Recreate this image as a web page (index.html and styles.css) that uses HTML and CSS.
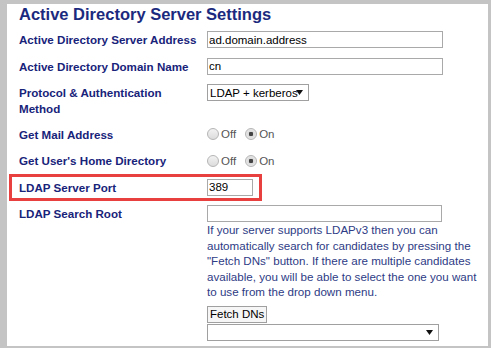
FILE: index.html
```html
<!DOCTYPE html>
<html lang="en">
<head>
    <meta charset="UTF-8">
    <title>Active Directory Server Settings</title>
    <link rel="stylesheet" href="styles.css">
</head>
<body>
    <div class="panel">
        <h1 class="title">Active Directory Server Settings</h1>

        <div class="row">
            <label class="label">Active Directory Server Address</label>
            <input class="input wide" type="text" value="ad.domain.address">
        </div>

        <div class="row">
            <label class="label">Active Directory Domain Name</label>
            <input class="input wide" type="text" value="cn">
        </div>

        <div class="row">
            <label class="label">Protocol &amp; Authentication Method</label>
            <span class="select-wrap proto">
                <select class="select">
                    <option>LDAP + kerberos</option>
                </select>
                <svg class="arrow" width="7" height="5" viewBox="0 0 7 5"><path d="M0 0h7L3.5 5z" fill="#111"/></svg>
            </span>
        </div>

        <div class="row short">
            <label class="label">Get Mail Address</label>
            <div class="radios">
                <label class="radio"><input type="radio" name="mail"> Off</label>
                <label class="radio"><input type="radio" name="mail" checked> On</label>
            </div>
        </div>

        <div class="row">
            <label class="label">Get User's Home Directory</label>
            <div class="radios">
                <label class="radio"><input type="radio" name="home"> Off</label>
                <label class="radio"><input type="radio" name="home" checked> On</label>
            </div>
        </div>

        <div class="row highlight">
            <label class="label">LDAP Server Port</label>
            <input class="input port" type="text" value="389">
        </div>

        <div class="row root">
            <label class="label">LDAP Search Root</label>
            <div class="field">
                <input class="input root-input" type="text" value="">
                <p class="help">If your server supports LDAPv3 then you can automatically search for candidates by pressing the "Fetch DNs" button. If there are multiple candidates available, you will be able to select the one you want to use from the drop down menu.</p>
                <button class="button">Fetch DNs</button>
                <span class="select-wrap dns">
                    <select class="select"><option></option></select>
                    <svg class="arrow" width="7" height="5" viewBox="0 0 7 5"><path d="M0 0h7L3.5 5z" fill="#111"/></svg>
                </span>
            </div>
        </div>
    </div>
</body>
</html>
```
FILE: styles.css
```css
body {
    margin: 0;
    background: #c4c4c4;
    font-family: "Liberation Sans", Arial, sans-serif;
}

.panel {
    background: #fff;
    margin: 4px 3px 0 7px;
    height: 342px;
    padding: 0 0 0 12px;
    box-sizing: border-box;
    overflow: hidden;
}

.title {
    margin: 0 0 7px;
    font-size: 16.5px;
    line-height: 20px;
    color: #1b2a7e;
}

.row {
    display: grid;
    grid-template-columns: 188px 1fr;
    align-items: start;
    justify-items: start;
    margin-bottom: 9.5px;
}

.row.short {
    margin-top: -1px;
}

.label {
    font-size: 11.6px;
    font-weight: bold;
    line-height: 16px;
    padding-top: 1px;
    padding-right: 8px;
    color: #18237a;
}

.input {
    box-sizing: border-box;
    height: 17px;
    border: 1px solid #a9a9a9;
    padding: 0 1px;
    margin: 0;
    font-family: "Liberation Sans", Arial, sans-serif;
    font-size: 11.5px;
    color: #000;
    background: #fff;
}

.wide {
    width: 236px;
}

.port {
    width: 46px;
}

.root-input {
    width: 235px;
    display: block;
}

.select-wrap {
    position: relative;
    display: inline-block;
}

.select {
    appearance: none;
    -webkit-appearance: none;
    box-sizing: border-box;
    height: 17px;
    border: 1px solid #a0a0a0;
    border-radius: 0;
    background: #fff;
    padding: 0 0 0 2px;
    margin: 0;
    font-family: "Liberation Sans", Arial, sans-serif;
    font-size: 11.5px;
    color: #000;
    display: block;
}

.proto .select {
    width: 102px;
}

.dns .select {
    width: 232px;
}

.arrow {
    position: absolute;
    top: 6px;
    right: 6px;
}

.radios {
    display: flex;
    gap: 9px;
    font-size: 11.5px;
    color: #555;
    height: 17px;
    align-items: center;
}

.radio {
    display: flex;
    align-items: center;
}

.radio input {
    appearance: none;
    -webkit-appearance: none;
    box-sizing: border-box;
    margin: 0 2px 0 0;
    width: 12px;
    height: 12px;
    border: 1px solid #b5b5b5;
    border-radius: 50%;
    background: linear-gradient(#f2f2f2, #dcdcdc);
}

.radio input:checked {
    background: radial-gradient(circle, #444 0, #444 2px, #dadada 2.5px, #f2f2f2 100%);
}

.highlight {
    position: relative;
}

.highlight::after {
    content: "";
    position: absolute;
    left: -10px;
    top: -5px;
    width: 253px;
    height: 27px;
    border: 3px solid #e8403f;
    box-sizing: border-box;
}

.help {
    margin: 0;
    width: 272px;
    font-size: 11.6px;
    line-height: 15.5px;
    color: #2e3b85;
}

.button {
    display: block;
    margin-top: 6px;
    height: 17px;
    padding: 0 2px;
    border: 1px solid #a0a0a0;
    background: #f6f6f6;
    font-family: "Liberation Sans", Arial, sans-serif;
    font-size: 11.5px;
    line-height: 15px;
    color: #000;
}
```
